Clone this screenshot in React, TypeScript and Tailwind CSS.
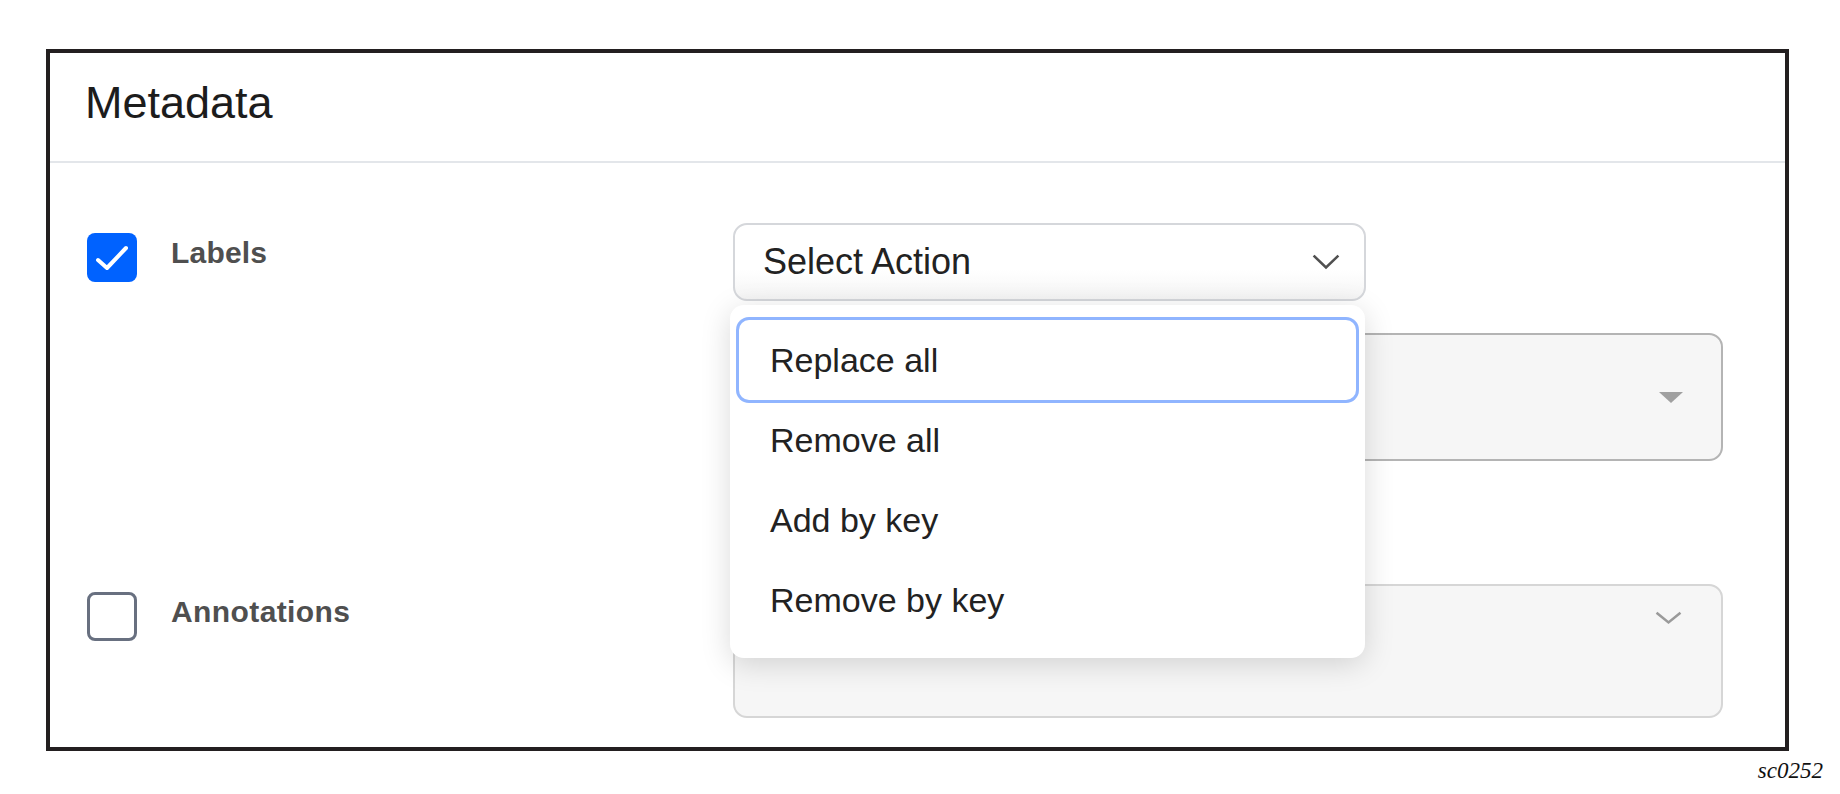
import React from "react";

function Chevron({ color, w, h, sw }: { color: string; w: number; h: number; sw: number }) {
  return (
    <svg width={w} height={h} viewBox={`0 0 ${w} ${h}`} fill="none">
      <polyline
        points={`${sw},${sw} ${w / 2},${h - sw} ${w - sw},${sw}`}
        stroke={color}
        strokeWidth={sw}
        strokeLinecap="square"
        strokeLinejoin="miter"
      />
    </svg>
  );
}

export default function App() {
  const items = ["Replace all", "Remove all", "Add by key", "Remove by key"];
  return (
    <div className="w-[1840px] h-[794px] bg-white font-['Liberation_Sans',Arial,sans-serif] pt-[49px] pl-[46px]">
      <div className="w-[1743px] h-[702px] border-4 border-[#231f20] flex flex-col">
        {/* header */}
        <div className="h-[108px] pl-[35px] pt-[28px] text-[45px] leading-[44px] text-[#1c1c1c]">Metadata</div>
        <div className="h-[2px] bg-[#e3e6ea]" />
        {/* body */}
        <div className="pt-[60px] flex flex-col">
          {/* Labels row */}
          <div className="flex">
            <div className="w-[683px] pl-[37px] flex items-start">
              <div className="mt-[10px] w-[50px] h-[49px] rounded-[8px] bg-[#0062ff] flex items-center justify-center">
                <svg width="50" height="49" viewBox="0 0 50 49" fill="none">
                  <polyline points="11,27 20,35 39,15" stroke="white" strokeWidth="4" strokeLinecap="round" strokeLinejoin="round" />
                </svg>
              </div>
              <div className="ml-[34px] mt-[15px] text-[30px] leading-[30px] font-bold text-[#4f4f4f] tracking-[0.2px]">Labels</div>
            </div>
            <div className="w-[990px] relative">
              <div className="h-[78px] w-[633px] border-2 border-[#d5d7db] rounded-[14px] bg-gradient-to-b from-white from-60% to-[#f5f5f5] flex items-center justify-between pl-[28px] pr-[24px]">
                <span className="text-[36px] leading-[36px] text-[#222]">Select Action</span>
                <Chevron color="#505050" w={28} h={16} sw={2.5} />
              </div>
              <div className="mt-[32px] h-[128px] border-2 border-[#b4b4b4] rounded-[14px] bg-[#f6f6f6] flex items-center justify-end pr-[38px]">
                <svg width="24" height="11" viewBox="0 0 24 11">
                  <polygon points="0,0 24,0 12,11" fill="#a0a0a0" />
                </svg>
              </div>
              {/* dropdown menu */}
              <div className="absolute top-[82px] left-[-3px] w-[635px] bg-white rounded-[14px] shadow-[0_6px_30px_rgba(0,0,0,0.15)] px-[9px] pt-[15px] pb-[18px]">
                {items.map((t, i) => (
                  <div
                    key={t}
                    className={
                      i === 0
                        ? "h-[80px] rounded-[10px] ring-[3px] ring-[#90b5ff] flex items-center pl-[31px] text-[34px] leading-[34px] text-[#222]"
                        : "h-[80px] rounded-[10px] flex items-center pl-[31px] text-[34px] leading-[34px] text-[#222]"
                    }
                  >
                    {t}
                  </div>
                ))}
              </div>
            </div>
          </div>
          {/* Annotations row */}
          <div className="flex mt-[123px]">
            <div className="w-[683px] pl-[37px] flex items-start">
              <div className="mt-[8px] w-[50px] h-[49px] rounded-[8px] border-[3px] border-[#687080] bg-white" />
              <div className="ml-[34px] mt-[13px] text-[30px] leading-[30px] font-bold text-[#4f4f4f] tracking-[0.4px]">Annotations</div>
            </div>
            <div className="w-[990px]">
              <div className="h-[134px] border-2 border-[#d6d6d6] rounded-[14px] bg-[#f6f6f6] flex justify-end items-start pt-[25px] pr-[39px]">
                <Chevron color="#9a9a9a" w={27} h={14} sw={2.5} />
              </div>
            </div>
          </div>
        </div>
      </div>
      <div className="flex justify-end pr-[17px] mt-[9px] font-['Liberation_Serif','Times_New_Roman',serif] italic text-[23px] leading-[22px] text-[#111]">
        sc0252
      </div>
    </div>
  );
}
